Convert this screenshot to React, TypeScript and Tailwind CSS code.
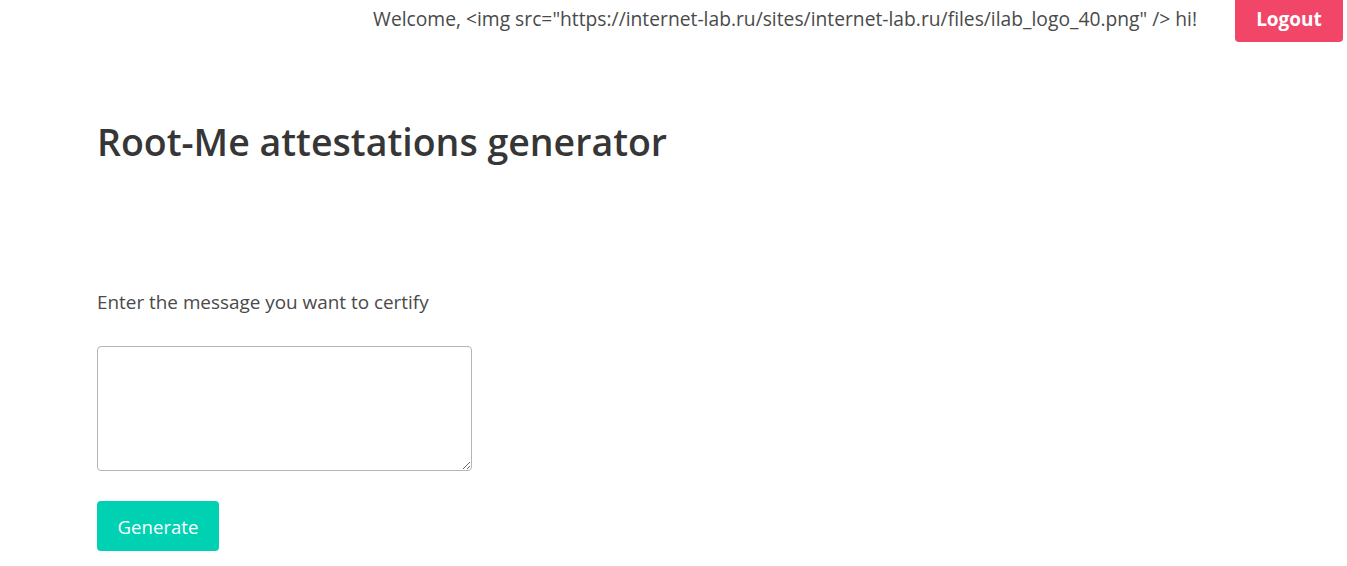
export default function App() {
  return (
    <div className="min-h-screen bg-white font-['Open_Sans',sans-serif] text-[#4a4a4a]">
      <header className="flex items-start justify-end pr-[4px]">
        <span className="mt-[7px] text-[19.25px] leading-[24px]">
          Welcome, &lt;img src="https://internet-lab.ru/sites/internet-lab.ru/files/ilab_logo_40.png" /&gt; hi!
        </span>
        <button className="ml-[38px] h-[42px] w-[108px] rounded-b-[4px] bg-[#f14668] pb-[3px] text-[19px] font-bold text-white">
          Logout
        </button>
      </header>

      <main className="px-[97px]">
        <h1 className="mt-[76px] text-[37.5px] font-semibold leading-[48px] text-[#363636]">
          Root-Me attestations generator
        </h1>

        <p className="mt-[124px] text-[18.9px] leading-[24px]">Enter the message you want to certify</p>

        <textarea className="mt-[32px] block h-[125px] w-[375px] rounded-[4px] border border-[#b5b5b5] p-2" />

        <button className="mt-[30px] h-[50px] w-[122px] rounded-[4px] bg-[#00d1b2] pt-[2px] text-[18.6px] text-white">
          Generate
        </button>
      </main>
    </div>
  );
}
